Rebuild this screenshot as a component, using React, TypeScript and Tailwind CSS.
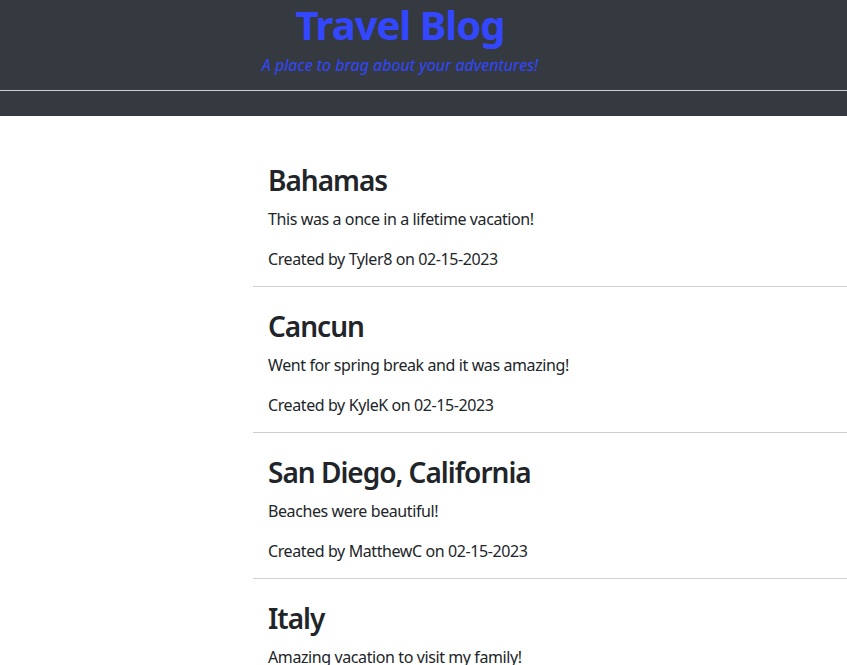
import React from 'react';

const posts = [
    { title: 'Bahamas', body: 'This was a once in a lifetime vacation!', author: 'Tyler8', date: '02-15-2023' },
    { title: 'Cancun', body: 'Went for spring break and it was amazing!', author: 'KyleK', date: '02-15-2023' },
    { title: 'San Diego, California', body: 'Beaches were beautiful!', author: 'MatthewC', date: '02-15-2023' },
    { title: 'Italy', body: 'Amazing vacation to visit my family!', author: 'JohnD', date: '02-15-2023' },
];

export default function App() {
    return (
        <div className="min-h-screen bg-white text-[#212529] font-['Noto_Sans',sans-serif]">
            <header className="bg-[#343a40] h-[116px]">
                <div className="w-[800px] text-center text-[#3347ff]">
                    <h1 className="text-[40px] font-bold leading-[48px] pt-[1px] tracking-[-1px]">Travel Blog</h1>
                    <p className="italic text-[16px] leading-[20px] mt-[6px]">A place to brag about your adventures!</p>
                </div>
                <hr className="mt-[15px] border-0 border-t border-[#d0d0d0]" />
            </header>

            <main className="pl-[253px] pt-[25px]">
                {posts.map((post) => (
                    <article key={post.title} className="border-b border-[#cfcfcf] px-[15px] pt-[21px] pb-[15px]">
                        <h2 className="text-[28px] font-semibold leading-[36px] mb-[9px] tracking-[-1px]">{post.title}</h2>
                        <p className="text-[16px] leading-[24px] mb-[16px] tracking-[-0.4px]">{post.body}</p>
                        <p className="text-[16px] leading-[24px] tracking-[-0.4px]">
                            Created by {post.author} on {post.date}
                        </p>
                    </article>
                ))}
            </main>
        </div>
    );
}
